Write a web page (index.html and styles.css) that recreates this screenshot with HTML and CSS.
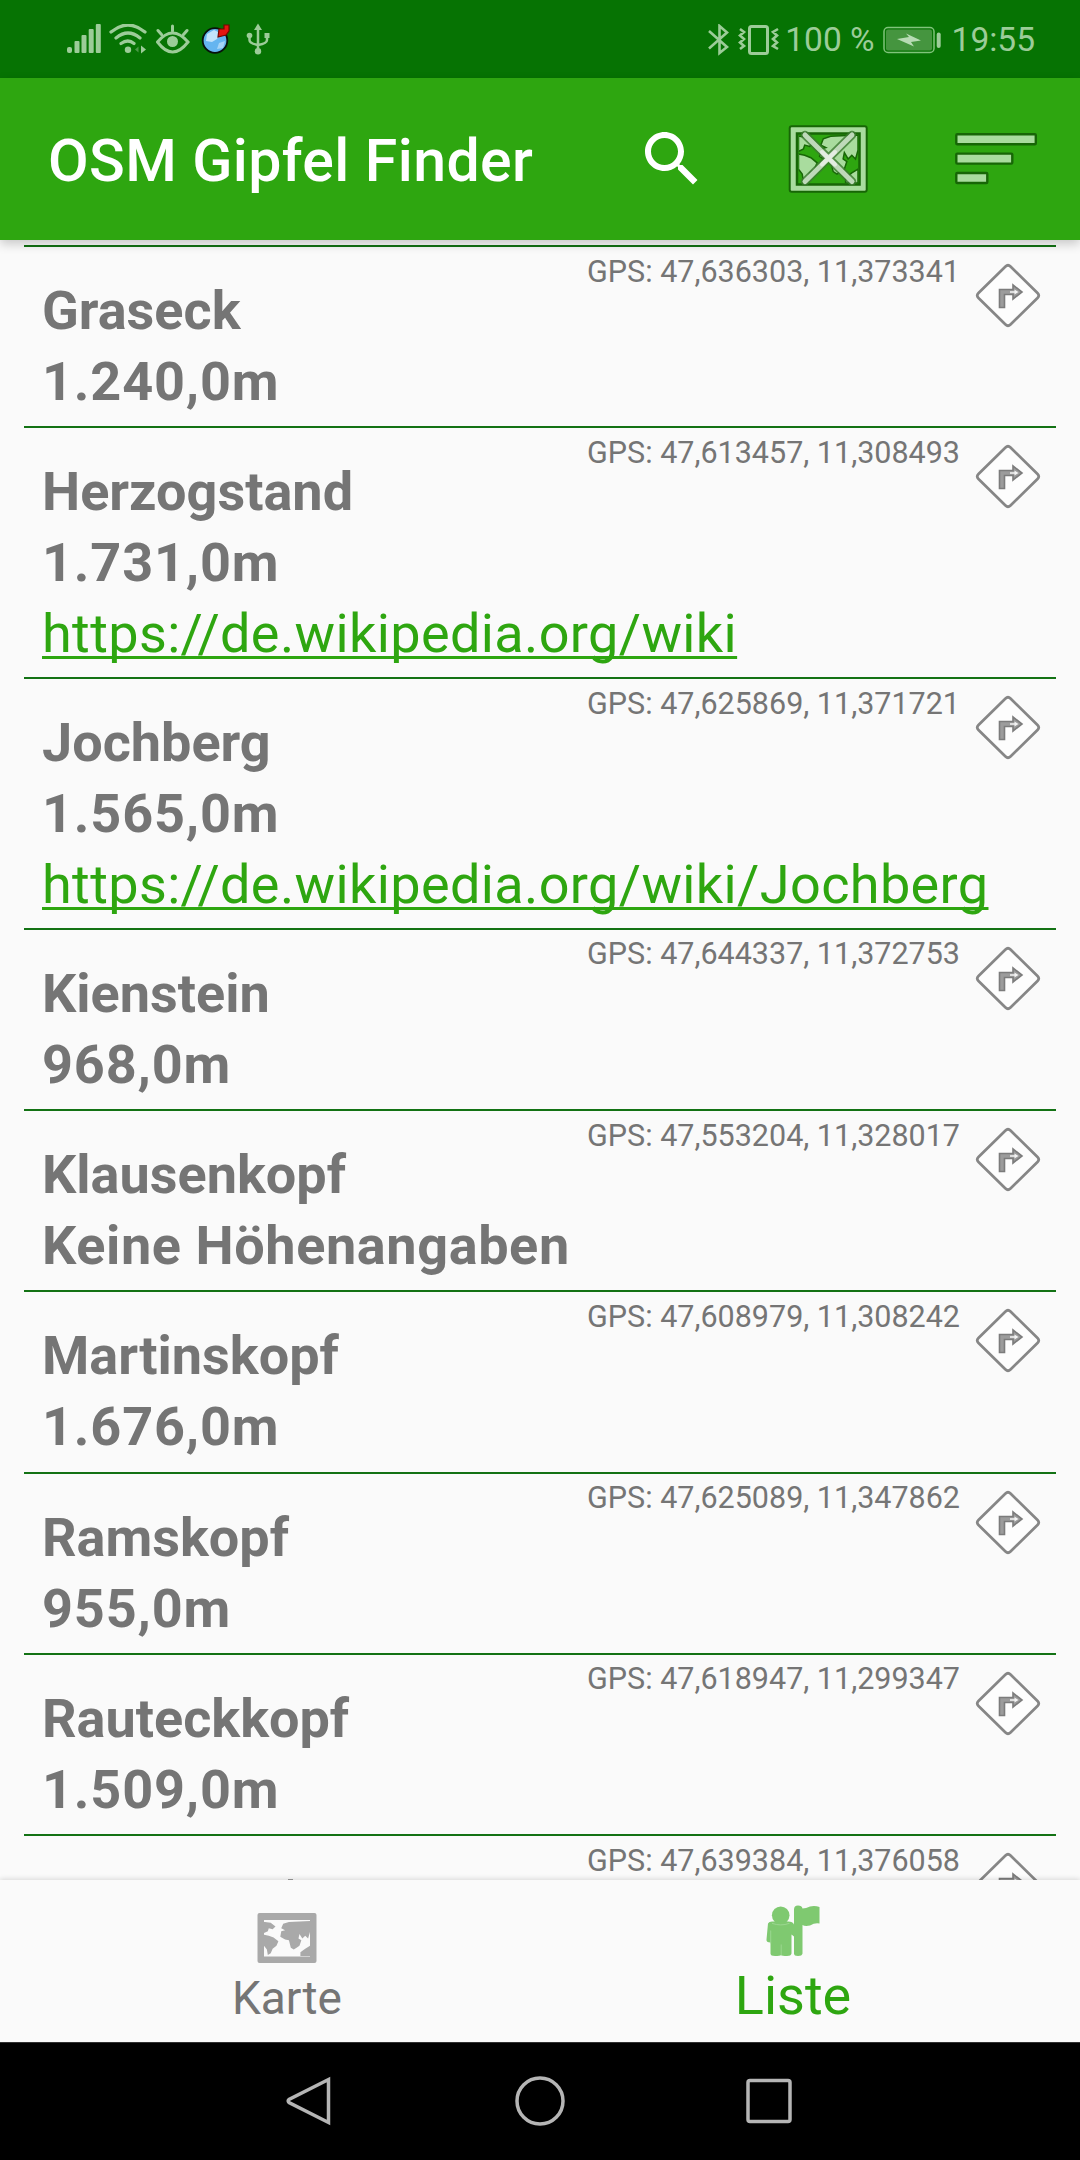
FILE: index.html
```html
<!DOCTYPE html>
<html lang="de">
<head>
<meta charset="utf-8">
<title>OSM Gipfel Finder</title>
<link rel="stylesheet" href="styles.css">
</head>
<body>
<svg class="defs" width="0" height="0" aria-hidden="true">
  <symbol id="turn" viewBox="975 263 66 66">
    <path d="M1005.5 266.5Q1008 264 1010.5 266.5L1037.500 293Q1040 295.500 1037.500 298L1010.500 324.500Q1008 327 1005.500 324.500L978.500 298Q976 295.500 978.500 293Z" fill="#fdfdfd" stroke="#868686" stroke-width="2.700"/>
    <path d="M999.500 307.500V289.500H1013V285L1022 292L1013 299V294.500H1004.500V307.500Z" fill="#9c9c9c" stroke="#7c7c7c" stroke-width="1.600"/>
    <path d="M1014.500 289.500L1018.500 292L1014.500 294.500V292.800H1010V291.200H1014.500Z" fill="#f4f4f4"/>
  </symbol>
  <symbol id="lands" viewBox="0 0 48 38">
    <path d="M1 1L7 2L12 6L9 9L5 8L4 11L0 13V1ZM0 15L5 16L10 18L15 22L13 27L9 30L7 35L4 37L3 31L0 27ZM18 8L20 3L26 1L48 0V12L46 19L43 16L40 19L37 14L36 19L39 21L37 27L34 29L31 31L28 29L26 21L22 20L17 17L18 11L22 10ZM38 34L43 30L48 27V38H38Z"/>
  </symbol>
</svg>
<div class="screen">
  <div class="status">
    <div class="status-left">
      <svg width="34" height="30" viewBox="67 24 34 30" fill="#9ccc98"><rect x="67" y="47" width="5" height="6" rx="2"/><rect x="74.500" y="41" width="5" height="12" rx="1"/><rect x="81.500" y="35" width="5" height="18" rx="1"/><rect x="88.700" y="29" width="5" height="24" rx="1"/><rect x="95.800" y="24" width="5" height="29" rx="1"/></svg>
      <svg class="wifi" width="38" height="30" viewBox="109 24 38 30" fill="none" stroke="#9ccc98" stroke-width="3.200" stroke-linecap="round"><path d="M111 32Q128 18 145 32M116 38Q128 28 140 38M121 43.500Q128 38.500 134 43.500"/><circle cx="128" cy="49.700" r="3.200" fill="#9ccc98" stroke="none"/><path d="M141 45.500L146 49.500L141 53.500Z" fill="#9ccc98" stroke="none"/><path d="M138.500 46.500L135 49.500L138.500 52.500Z" fill="#4d994a" stroke="none"/></svg>
      <svg class="eye" width="34" height="30" viewBox="156 24 34 30" fill="none" stroke="#9ccc98" stroke-width="3" stroke-linecap="round"><path d="M157.500 42Q172.500 24 188 42Q172.500 62 157.500 42ZM172.500 26V31M158 30.500L161.500 34.500M187 30.500L183.500 34.500"/><circle cx="172.500" cy="41.500" r="5.500" fill="#9ccc98" stroke="none"/></svg>
      <svg class="globe" width="30" height="30" viewBox="201 25 30 30"><circle cx="215" cy="41.500" r="12.300" fill="#65b5f0" stroke="#08120c" stroke-width="1.800"/><path d="M207 35L214 31L220 34L217 40L212 43L206 42Z" fill="#c2e3fb"/><path d="M219 44L225 42L223 49L217 50Z" fill="#a6d5f7"/><path d="M218 38L219 30L224 30L224 26L229 26L229 32L226 36Z" fill="#e3150f" stroke="#730600" stroke-width="1.200"/></svg>
      <svg class="usb" width="24" height="32" viewBox="246 23 24 32" fill="none" stroke="#9ccc98" stroke-width="2.500"><path d="M258 29V50M249.500 37V40Q249.500 43.500 258 45Q267 43.500 267 40V36"/><path d="M258 23.500L262 30H254Z" fill="#9ccc98" stroke="none"/><circle cx="249.500" cy="35.500" r="2.800" fill="#9ccc98" stroke="none"/><rect x="264.500" y="33" width="5" height="5" fill="#9ccc98" stroke="none"/><circle cx="258" cy="51.300" r="3.200" fill="#9ccc98" stroke="none"/></svg>
    </div>
    <div class="status-right">
      <svg width="22" height="32" viewBox="706 23 22 32" fill="none" stroke="#9ccc98" stroke-width="2.600" stroke-linejoin="miter"><path d="M708 30L726 46L718.500 52V25L726 31.500L708 47.500"/></svg>
      <svg class="vibrate" width="42" height="32" viewBox="738 23 42 32" fill="none" stroke="#9ccc98" stroke-width="3"><rect x="749.500" y="25.500" width="18" height="27" rx="2"/><path d="M740 28L744 31L740 34.500L744 38L740 41.500L744 45L740 48M778 28L773 31L777 34.500L773 38L777 41.500L773 45L778 48" stroke-width="2.600"/></svg>
      <span class="status-text percent">100 %</span>
      <svg class="battery" width="60" height="28" viewBox="882 25 60 28"><rect x="884" y="26.500" width="50" height="25" rx="4" fill="none" stroke="#80c47b" stroke-width="1.500"/><rect x="886" y="28.500" width="46" height="21" rx="2" fill="#45953f"/><path d="M897 38L909 36L906 32.500L921 39.500L911 41L914 45.500Z" fill="#b7dbb4"/><rect x="936.700" y="31.500" width="4" height="15.500" rx="2" fill="#9ccc98"/></svg>
      <span class="status-text">19:55</span>
    </div>
  </div>
  <header class="appbar">
    <h1 class="title">OSM Gipfel Finder</h1>
    <svg class="search" width="72" height="72" viewBox="0 0 24 24" fill="#fff"><path d="M15.500 14h-.79l-.28-.27C15.410 12.590 16 11.110 16 9.500 16 5.910 13.090 3 9.500 3S3 5.910 3 9.500 5.910 16 9.500 16c1.610 0 3.090-.59 4.230-1.570l.27.28v.79l5 4.990L20.490 19l-4.990-5zm-6 0C7.010 14 5 11.990 5 9.500S7.010 5 9.500 5 14 7.010 14 9.500 11.990 14 9.500 14z"/></svg>
    <svg class="nomap" width="80" height="70" viewBox="788 124 80 70">
      <rect x="789.700" y="126.200" width="77" height="65.500" rx="2" fill="#a9dc9e" stroke="#176606" stroke-width="2"/>
      <rect x="797" y="133.500" width="62.500" height="51" fill="#2ea610" stroke="#176606" stroke-width="2.500"/>
      <svg x="798.500" y="135" width="59.500" height="48" viewBox="0 0 48 38" preserveAspectRatio="none" fill="#a9dc9e" stroke="#176606" stroke-width="1.200"><use href="#lands"/></svg>
      <path d="M805 135L852 181.500M852 135L805 181.500" stroke="#3c7a31" stroke-width="8.500" stroke-linecap="round" opacity=".8"/>
      <path d="M805 135L852 181.500M852 135L805 181.500" stroke="#bfd9ba" stroke-width="5" stroke-linecap="round"/>
      <path d="M822 152L835 164.500M835 152L822 164.500" stroke="#e4ede2" stroke-width="4" stroke-linecap="round"/>
    </svg>
    <svg class="sort" width="84" height="54" viewBox="954 133 84 54" fill="#a9dc9e" stroke="#176606" stroke-width="2.400"><rect x="956.300" y="135.200" width="79.500" height="10" rx="1"/><rect x="956.300" y="154.600" width="56" height="10" rx="1"/><rect x="956.300" y="174" width="31" height="10" rx="1"/></svg>
  </header>
  <main class="list">
    <article class="item"><div class="info"><b>Graseck</b><b class="height">1.240,0m</b></div><span class="gps">GPS: 47,636303, 11,373341</span><svg class="turn"><use href="#turn"/></svg></article>
    <article class="item item-link"><div class="info"><b>Herzogstand</b><b class="height">1.731,0m</b><a>https://de.wikipedia.org/wiki</a></div><span class="gps">GPS: 47,613457, 11,308493</span><svg class="turn"><use href="#turn"/></svg></article>
    <article class="item item-link"><div class="info"><b>Jochberg</b><b class="height">1.565,0m</b><a>https://de.wikipedia.org/wiki/Jochberg</a></div><span class="gps">GPS: 47,625869, 11,371721</span><svg class="turn"><use href="#turn"/></svg></article>
    <article class="item"><div class="info"><b>Kienstein</b><b class="height">968,0m</b></div><span class="gps">GPS: 47,644337, 11,372753</span><svg class="turn"><use href="#turn"/></svg></article>
    <article class="item"><div class="info"><b>Klausenkopf</b><b class="no-height">Keine Höhenangaben</b></div><span class="gps">GPS: 47,553204, 11,328017</span><svg class="turn"><use href="#turn"/></svg></article>
    <article class="item"><div class="info"><b>Martinskopf</b><b class="height">1.676,0m</b></div><span class="gps">GPS: 47,608979, 11,308242</span><svg class="turn"><use href="#turn"/></svg></article>
    <article class="item"><div class="info"><b>Ramskopf</b><b class="height">955,0m</b></div><span class="gps">GPS: 47,625089, 11,347862</span><svg class="turn"><use href="#turn"/></svg></article>
    <article class="item"><div class="info"><b>Rauteckkopf</b><b class="height">1.509,0m</b></div><span class="gps">GPS: 47,618947, 11,299347</span><svg class="turn"><use href="#turn"/></svg></article>
    <article class="item"><div class="info"><i class="tip"></i></div><span class="gps">GPS: 47,639384, 11,376058</span><svg class="turn"><use href="#turn"/></svg></article>
  </main>
  <nav class="tabs">
    <div class="tab">
      <svg width="60" height="50" viewBox="257.500 1913 60 50"><path fill-rule="evenodd" d="M260 1913H315Q317 1913 317 1915V1961Q317 1963 315 1963H260Q258 1963 258 1961V1915Q258 1913 260 1913ZM264.500 1920V1956.500H310.500V1920Z" fill="#a9a9a9"/><svg x="264.500" y="1921" width="46" height="35" viewBox="0 0 48 38" preserveAspectRatio="none" fill="#a9a9a9"><use href="#lands"/></svg></svg>
      <span>Karte</span>
    </div>
    <div class="tab tab-active">
      <svg width="54" height="52" viewBox="766 1904.500 54 52" fill="#7fc970"><circle cx="780.700" cy="1914.700" r="8.800"/><path d="M772 1921H788Q793 1921 794 1924V1909Q794 1905 798 1905Q802 1905 802.500 1908Q806 1908 810 1906Q815 1905 819.500 1906.500V1923Q815 1922 810 1925Q805 1926 802.500 1924.500V1953Q802 1955.500 798 1955.500Q794 1955.500 794 1953V1936L791.500 1934V1953Q791 1955.500 787 1955.500Q782 1955.500 781 1954.500Q780 1955.500 775 1955.500Q770.500 1955.500 770.500 1953V1942Q766 1942 766.500 1939L768 1923Q769 1921 772 1921Z"/><path d="M781.200 1944V1955M770.700 1930V1943M772 1922.800Q780.700 1926 789.500 1922.800" fill="none" stroke="#a2d998" stroke-width=".8"/></svg>
      <span>Liste</span>
    </div>
  </nav>
  <div class="sysnav">
    <svg width="46" height="52" viewBox="286 2075 46 52"><path d="M328.500 2079.500V2122.500L289 2102.500Q287.500 2101 289 2099.500Z"/></svg>
    <svg width="52" height="52" viewBox="514 2075 52 52"><circle cx="540" cy="2101" r="23"/></svg>
    <svg width="48" height="52" viewBox="745 2075 48 52"><rect x="748" y="2080.500" width="42" height="41" rx="2"/></svg>
  </div>
</div>
</body>
</html>
```
FILE: styles.css
```css
* { box-sizing: border-box; }
body { margin: 0; font-family: Roboto, "Noto Sans", sans-serif; background: #fafafa; color: #757575; }
svg { display: block; flex: none; }
.defs { position: absolute; }
.screen { width: 1080px; height: 2160px; display: flex; flex-direction: column; overflow: hidden; }

.status { height: 78px; flex: none; background: #067303; display: flex; justify-content: space-between; align-items: flex-start; padding: 0 45px 0 67px; }
.status-left { display: flex; align-items: center; padding-top: 23px; }
.wifi { margin-left: 8px; }
.eye { margin-left: 9px; }
.globe { margin-left: 11px; }
.usb { margin-left: 15px; }
.status-right { display: flex; align-items: center; padding-top: 24px; height: 55px; }
.status-text { font-size: 33.500px; line-height: 32px; color: #9ccc98; white-space: nowrap; }
.vibrate { margin-left: 9px; }
.percent { margin-left: 5px; }
.battery { margin: 0 10px 0 7px; }

.appbar { height: 162px; flex: none; background: #2ea610; display: flex; align-items: center; padding: 0 42px 0 48px; position: relative; z-index: 1; box-shadow: 0 4px 10px rgba(0, 0, 0, .2); }
.title { margin: 0; width: 588px; padding-top: 4px; font-size: 59px; font-weight: 500; letter-spacing: .400px; color: #fff; line-height: 70px; white-space: nowrap; }
.nomap { margin-left: 80px; }
.sort { margin-left: 86px; }

.list { flex: 1; min-height: 0; overflow: hidden; padding: 5px 24px 0; }
.item { height: 181.250px; border-top: 2px solid #137214; display: flex; justify-content: flex-end; padding: 16px 15px 0 18px; }
.item-link { height: 250.750px; }
.info { flex: 1; width: 0; padding-top: 12px; display: flex; flex-direction: column; align-items: flex-start; font-size: 54px; line-height: 71px; white-space: nowrap; }
.height { letter-spacing: .850px; }
.no-height { letter-spacing: .600px; }
.info a { color: #2ea610; letter-spacing: .380px; text-decoration: underline; text-decoration-skip-ink: none; text-decoration-thickness: 3px; text-underline-offset: 4px; }
.tip { width: 5px; height: 2px; margin: 15px 0 0 246px; background: #9a9a9a; }
.gps { font-size: 30.500px; line-height: 36px; margin: -9.400px 15px 0 0; white-space: nowrap; }
.turn { width: 66px; height: 66px; }

.tabs { height: 162px; flex: none; display: flex; background: #fafafa; position: relative; z-index: 1; box-shadow: 0 -1px 5px rgba(0, 0, 0, .14); padding: 0 34px; }
.tab { flex: 1; display: flex; flex-direction: column; align-items: center; justify-content: flex-end; gap: 5px; padding-bottom: 14px; font-size: 46px; line-height: 60px; }
.tab-active { color: #2ea610; font-size: 54px; gap: 9px; padding-bottom: 16px; }

.sysnav { height: 118px; flex: none; background: #000; border-top: 1px solid #333; display: flex; justify-content: space-between; align-items: center; padding: 0 287px 2px 286px; fill: none; stroke: #b5b5b5; stroke-width: 3.500; }
.sysnav svg:nth-child(2) { margin-left: 2px; }
```
